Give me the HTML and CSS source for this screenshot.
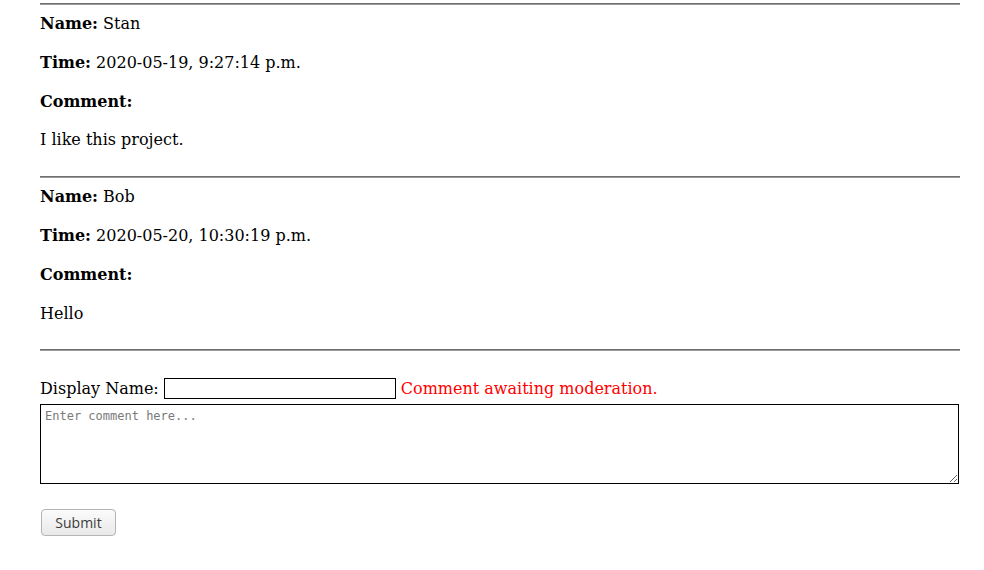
FILE: index.html
```html
<!DOCTYPE html>
<html lang="en">
<head>
<meta charset="utf-8">
<title>Comments</title>
<link rel="stylesheet" href="styles.css">
</head>
<body>
<div class="page">
  <hr class="rule first">
  <div class="comment">
    <p class="field"><b>Name:</b> Stan</p>
    <p class="field"><b>Time:</b> 2020-05-19, 9:27:14 p.m.</p>
    <p class="field"><b>Comment:</b></p>
    <p class="field">I like this project.</p>
  </div>
  <hr class="rule">
  <div class="comment">
    <p class="field"><b>Name:</b> Bob</p>
    <p class="field"><b>Time:</b> 2020-05-20, 10:30:19 p.m.</p>
    <p class="field"><b>Comment:</b></p>
    <p class="field">Hello</p>
  </div>
  <hr class="rule">
  <form class="comment-form">
    <div class="name-row">
      <label class="name-label" for="name">Display Name:</label>
      <input class="name-input" id="name" type="text">
      <span class="status">Comment awaiting moderation.</span>
    </div>
    <textarea class="comment-box" placeholder="Enter comment here..."></textarea>
    <button class="submit" type="button">Submit</button>
  </form>
</div>
</body>
</html>
```
FILE: styles.css
```css
html, body {
  margin: 0;
  padding: 0;
  background: #fff;
}

body {
  font-family: "DejaVu Serif", serif;
  font-size: 16px;
  color: #000;
}

.page {
  width: 920px;
  margin: 0 0 0 40px;
}

.rule {
  margin: 8px 0;
  height: 0;
  border: 0;
  border-top: 1px solid #6f6f6f;
  border-bottom: 1px solid #9a9a9a;
}

.rule.first {
  margin-top: 3px;
}

.comment {
  display: flex;
  flex-direction: column;
  padding-top: 1px;
}

.field {
  margin: 0 0 19.4px;
  line-height: 19.4px;
}

.field:last-child {
  margin-bottom: 18.4px;
}

.comment-form {
  display: flex;
  flex-direction: column;
  align-items: flex-start;
  padding-top: 18px;
}

.name-row {
  display: flex;
  align-items: center;
  gap: 5px;
  height: 22px;
  line-height: 19px;
}

.name-label {
  font-size: 16px;
}

.name-input {
  box-sizing: border-box;
  width: 232px;
  height: 21px;
  margin: 0;
  border: 1px solid #000;
  padding: 1px 2px;
  font-family: "DejaVu Sans", sans-serif;
  font-size: 13px;
}

.status {
  color: #ff0000;
}

.comment-box {
  box-sizing: border-box;
  display: block;
  width: 919px;
  height: 80px;
  margin: 5px 0 0;
  border: 1px solid #000;
  padding: 4px 4px 3px;
  font-family: "DejaVu Sans Mono", monospace;
  font-size: 12px;
  resize: both;
}

.comment-box::placeholder {
  color: #7a7a7a;
}

.submit {
  box-sizing: border-box;
  width: 75px;
  height: 27px;
  margin: 25px 0 0 1px;
  padding: 0;
  border: 1px solid #b4b4b4;
  border-radius: 4px;
  background: linear-gradient(#fbfbfb, #e9e9e9);
  color: #3c3c3c;
  font-family: "Open Sans", "DejaVu Sans", sans-serif;
  font-size: 14px;
}
```
